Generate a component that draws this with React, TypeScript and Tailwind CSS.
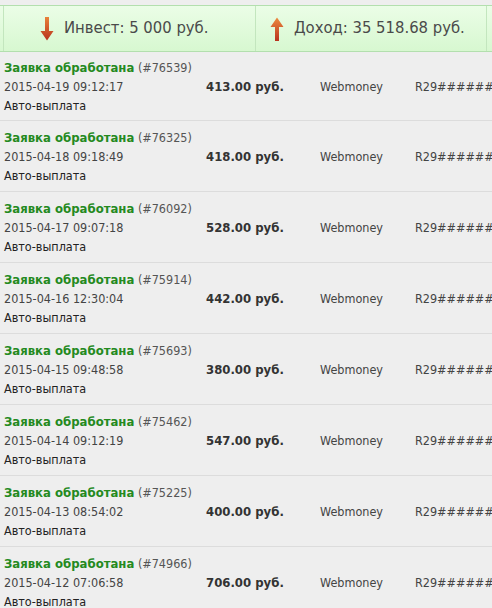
import React from "react";

const rows = [
  { id: "76539", date: "2015-04-19 09:12:17", amount: "413.00" },
  { id: "76325", date: "2015-04-18 09:18:49", amount: "418.00" },
  { id: "76092", date: "2015-04-17 09:07:18", amount: "528.00" },
  { id: "75914", date: "2015-04-16 12:30:04", amount: "442.00" },
  { id: "75693", date: "2015-04-15 09:48:58", amount: "380.00" },
  { id: "75462", date: "2015-04-14 09:12:19", amount: "547.00" },
  { id: "75225", date: "2015-04-13 08:54:02", amount: "400.00" },
  { id: "74966", date: "2015-04-12 07:06:58", amount: "706.00" },
];

function DownArrow() {
  return (
    <svg width="14" height="24" viewBox="0 0 14 24">
      <defs>
        <linearGradient id="dg" x1="0" y1="0" x2="0" y2="1">
          <stop offset="0" stopColor="#e8823a" />
          <stop offset="1" stopColor="#b8321e" />
        </linearGradient>
      </defs>
      <path d="M5 0 H9 V14 H13.5 L7 23.5 L0.5 14 H5 Z" fill="url(#dg)" />
    </svg>
  );
}

function UpArrow() {
  return (
    <svg width="14" height="24" viewBox="0 0 14 24">
      <defs>
        <linearGradient id="ug" x1="0" y1="0" x2="0" y2="1">
          <stop offset="0" stopColor="#ec8a3e" />
          <stop offset="1" stopColor="#b8321e" />
        </linearGradient>
      </defs>
      <path d="M7 0.5 L13.5 10 H9 V24 H5 V10 H0.5 Z" fill="url(#ug)" />
    </svg>
  );
}

export default function App() {
  const font = { fontFamily: '"DejaVu Sans Condensed", "DejaVu Sans", sans-serif' };
  return (
    <div className="w-[492px] h-[608px] overflow-hidden bg-[#eeeeee] pt-[5px]" style={font}>
      <div className="flex h-[47px] border-y border-[#b3dfae] bg-gradient-to-b from-[#ebfde7] to-[#d7f8d0]">
        <div className="w-[4px] shrink-0 border-r border-[#c3e6be]" />
        <div className="w-[252px] shrink-0 border-r border-[#c3e6be] flex items-center pl-[36px] gap-[10px]">
          <DownArrow />
          <span className="text-[16.5px] text-[#4a4a4a] whitespace-nowrap">Инвест: 5 000 руб.</span>
        </div>
        <div className="w-[231px] shrink-0 border-r border-[#c3e6be] flex items-center pl-[14px] gap-[10px]">
          <UpArrow />
          <span className="text-[16.5px] text-[#4a4a4a] whitespace-nowrap">Доход: 35 518.68 руб.</span>
        </div>
        <div className="flex-1" />
      </div>
      {rows.map((r, i) => (
        <div
          key={r.id}
          className={
            "flex items-center text-[12.5px] leading-[19px] text-[#333] " +
            (i === 0 ? "h-[68px]" : "h-[71px] border-t border-[#dcdcdc]")
          }
        >
          <div className="w-[206px] shrink-0 pl-[4px]">
            <div className="whitespace-nowrap">
              <span className="font-bold text-[13px] text-[#248a1e]">Заявка обработана</span>{" "}
              <span className="text-[#555]">(#{r.id})</span>
            </div>
            <div className="text-[#444]">{r.date}</div>
            <div className="text-[#222]">Авто-выплата</div>
          </div>
          <div className="w-[114px] shrink-0 font-bold text-[13px] text-[#333] whitespace-nowrap">{r.amount} руб.</div>
          <div className="w-[95px] shrink-0 text-[#444]">Webmoney</div>
          <div className="w-[77px] shrink-0 whitespace-nowrap overflow-hidden text-[#444]">R29########</div>
        </div>
      ))}
    </div>
  );
}
